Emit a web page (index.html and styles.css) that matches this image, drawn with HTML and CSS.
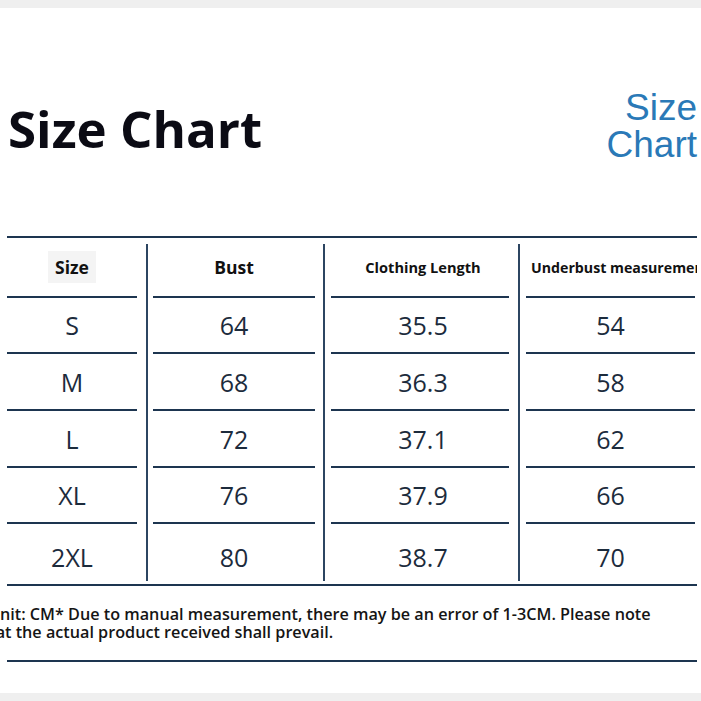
FILE: index.html
```html
<!DOCTYPE html>
<html lang="en">
<head>
<meta charset="utf-8">
<title>Size Chart</title>
<link rel="stylesheet" href="styles.css">
</head>
<body>
<div class="band"></div>
<header class="head">
  <h1 class="title">Size Chart</h1>
  <div class="sub"><span class="sl">Size</span><span class="sl">Chart</span></div>
</header>
<div class="table">
  <div class="col c1">
    <div class="cell h"><span class="hl">Size</span></div>
    <div class="cell r1">S</div>
    <div class="cell r2">M</div>
    <div class="cell r3">L</div>
    <div class="cell r4">XL</div>
    <div class="cell r5">2XL</div>
  </div>
  <div class="sep s1"><i class="vline"></i></div>
  <div class="col c2">
    <div class="cell h">Bust</div>
    <div class="cell r1">64</div>
    <div class="cell r2">68</div>
    <div class="cell r3">72</div>
    <div class="cell r4">76</div>
    <div class="cell r5">80</div>
  </div>
  <div class="sep s2"><i class="vline"></i></div>
  <div class="col c3">
    <div class="cell h small">Clothing Length</div>
    <div class="cell r1">35.5</div>
    <div class="cell r2">36.3</div>
    <div class="cell r3">37.1</div>
    <div class="cell r4">37.9</div>
    <div class="cell r5">38.7</div>
  </div>
  <div class="sep s3"><i class="vline"></i></div>
  <div class="col c4">
    <div class="cell h small left">Underbust measurement</div>
    <div class="cell r1">54</div>
    <div class="cell r2">58</div>
    <div class="cell r3">62</div>
    <div class="cell r4">66</div>
    <div class="cell r5">70</div>
  </div>
</div>
<p class="note"><span class="l1">Unit: CM* Due to manual measurement, there may be an error of 1-3CM. Please note</span><span class="l2">that the actual product received shall prevail.</span></p>
<div class="rule"></div>
<div class="spacer"></div>
<div class="band"></div>
</body>
</html>
```
FILE: styles.css
```css
html, body {
  margin: 0;
  padding: 0;
  background: #ffffff;
  overflow: hidden;
}
body {
  width: 701px;
  height: 701px;
  font-family: "Open Sans", "Noto Sans", sans-serif;
  color: #1c2a3a;
}
.band {
  height: 8px;
  background: #efefef;
}
.head {
  height: 228px;
  display: flex;
  justify-content: space-between;
  align-items: flex-start;
}
.title {
  margin: 95px 0 0 8px;
  font-family: "Open Sans", sans-serif;
  font-weight: 700;
  font-size: 51px;
  line-height: 51px;
  color: #0b0b14;
}
.sub {
  margin: 81px 4px 0 0;
  display: flex;
  flex-direction: column;
  align-items: flex-end;
  font-family: "Liberation Sans", Arial, sans-serif;
  font-size: 37px;
  line-height: 37px;
  color: #2a79b7;
}
.sl { display: block; }
.table {
  display: flex;
  margin-left: 7px;
  width: 690px;
  border-top: 2px solid #1d3550;
  border-bottom: 2px solid #1d3550;
  overflow: hidden;
}
.col {
  display: flex;
  flex-direction: column;
  flex-shrink: 0;
  min-width: 0;
}
.c1 { width: 130px; }
.c2 { width: 162px; }
.c3 { width: 178px; }
.c4 { width: 171px; }
.sep {
  display: flex;
  flex-shrink: 0;
  padding: 6px 0 3px 0;
  box-sizing: border-box;
}
.s1 { width: 16px; padding-left: 9px; }
.s2 { width: 16px; padding-left: 8px; }
.s3 { width: 17px; padding-left: 9px; }
.vline {
  display: block;
  width: 2px;
  background: #2c4561;
}
.cell {
  display: flex;
  align-items: center;
  justify-content: center;
  font-size: 25px;
  color: #1c2b3c;
  border-bottom: 2px solid #1d3550;
  white-space: nowrap;
}
.c3 .cell { padding-left: 6px; }
.c4 .cell { margin-right: 2px; }
.h {
  height: 58px;
  font-size: 17.5px;
  font-weight: 700;
  color: #111111;
}
.hl {
  background: #f4f4f4;
  padding: 4px 7px;
}
.small { font-size: 14.6px; }
.c4 .small { font-size: 14.2px; }
.left {
  justify-content: flex-start;
  padding-left: 5px;
}
.r1 { height: 54px; }
.r2 { height: 55px; }
.r3 { height: 55px; }
.r4 { height: 54px; }
.r5 { height: 60px; border-bottom: 0; padding-top: 6px; box-sizing: border-box; }
.note {
  margin: 19px 0 0 0;
  font-size: 16.2px;
  line-height: 18px;
  font-weight: 600;
  color: #151515;
  white-space: nowrap;
}
.l1, .l2 { display: block; }
.l1 { margin-left: -12px; }
.l2 { margin-left: -21px; }
.rule {
  margin: 19px 0 0 7px;
  width: 690px;
  height: 2px;
  background: #1d3550;
}
.spacer { height: 31px; }
```
